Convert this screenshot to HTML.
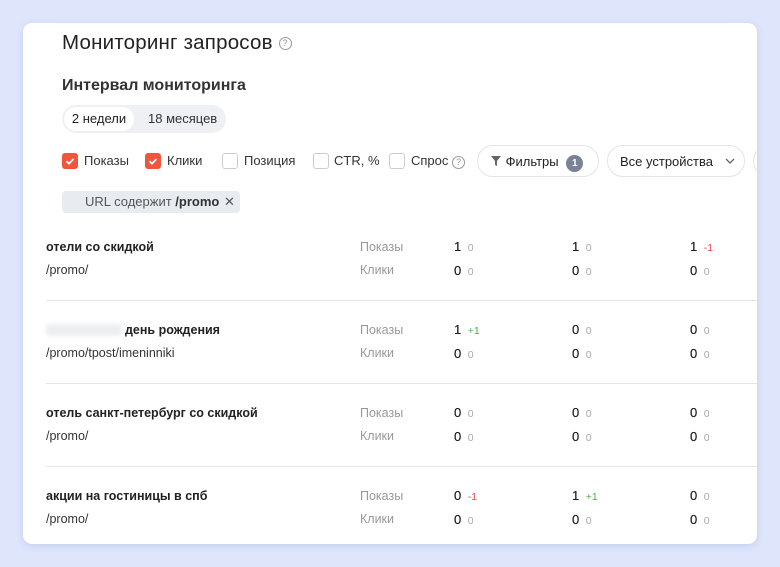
<!DOCTYPE html>
<html><head><meta charset="utf-8"><style>
body{margin:0;width:780px;height:567px;background:#dfe6fc;font-family:"Liberation Sans",sans-serif;position:relative;overflow:hidden;color:#222}
.card{position:absolute;left:23px;top:23px;width:734px;height:521px;background:#fff;border-radius:9px;box-shadow:0 2px 8px rgba(120,140,200,.25);overflow:hidden}
.a{position:absolute;white-space:nowrap}
.h1{font-size:20.5px;color:#222;left:39px;top:8px;letter-spacing:0.2px}
.h2{font-size:16px;font-weight:bold;left:39px;top:54px;color:#333}
.seg{left:39px;top:82px;width:164px;height:28px;background:#eef0f3;border-radius:14px}
.seg .on{position:absolute;left:2px;top:2px;width:70px;height:24px;background:#fff;border-radius:12px;font-size:13px;line-height:24px;text-align:center}
.seg .off{position:absolute;left:86px;top:2px;font-size:13px;line-height:24px;color:#333}
.cb{width:14px;height:14px;border:1px solid #ccc;border-radius:3px;top:130px}
.cb.ck{background:#f0553d;border-color:#f0553d}
.lb{font-size:13px;top:130px;color:#333}
.btn{height:32px;border:1px solid #e4e4e4;border-radius:17px;top:122px;font-size:13px;line-height:32px;box-sizing:border-box}
.tag{left:39px;top:168px;width:178px;height:22px;background:#e8ecf1;border-radius:4px;font-size:13px;line-height:22px;color:#555}
.q{font-size:12.5px;font-weight:bold;left:23px;color:#222}
.u{font-size:12.5px;left:23px;color:#333}
.l{font-size:12.5px;left:337px;color:#999}
.n{font-size:13px;color:#222;text-shadow:0 0 0.4px #222}
.d{font-size:10.5px;color:#aaa;text-shadow:none}
.r{color:#e5484d}.g{color:#4caf50}
.sep{left:23px;width:711px;height:1px;background:#e6e6e6}
</style></head><body>
<div class="card">
<div class="a h1">Мониторинг запросов <span style="display:inline-block;width:11px;height:11px;border:1.3px solid #999;border-radius:50%;font-size:9px;line-height:11px;text-align:center;color:#999;vertical-align:3px">?</span></div>
<div class="a h2">Интервал мониторинга</div>
<div class="a seg"><div class="on">2 недели</div><div class="off">18 месяцев</div></div>

<div class="a cb ck" style="left:39px"><svg width="14" height="14"><path d="M3.5 7.2l2.5 2.4 4.5-4.6" stroke="#fff" stroke-width="1.8" fill="none"/></svg></div>
<div class="a lb" style="left:61px">Показы</div>
<div class="a cb ck" style="left:122px"><svg width="14" height="14"><path d="M3.5 7.2l2.5 2.4 4.5-4.6" stroke="#fff" stroke-width="1.8" fill="none"/></svg></div>
<div class="a lb" style="left:144px">Клики</div>
<div class="a cb" style="left:199px"></div>
<div class="a lb" style="left:221px">Позиция</div>
<div class="a cb" style="left:290px"></div>
<div class="a lb" style="left:311px">CTR, %</div>
<div class="a cb" style="left:366px"></div>
<div class="a lb" style="left:388px">Спрос <span style="display:inline-block;width:11px;height:11px;border:1.3px solid #999;border-radius:50%;font-size:9px;line-height:11px;text-align:center;color:#999">?</span></div>
<div class="a btn" style="left:454px;width:122px;padding-left:12px"><svg width="12" height="12" style="vertical-align:-1px"><path d="M1 1h10L7 6v5L5 10V6z" fill="#666"/></svg> Фильтры <span style="display:inline-block;width:17px;height:17px;border-radius:50%;background:#7a8298;color:#fff;font-size:10px;line-height:17px;text-align:center;margin-left:4px;font-weight:bold">1</span></div>
<div class="a btn" style="left:584px;width:138px;padding-left:12px">Все устройства <svg width="10" height="6" style="margin-left:8px;vertical-align:2px"><path d="M1 1l4 4 4-4" stroke="#666" fill="none" stroke-width="1.3"/></svg></div>
<div class="a btn" style="left:730px;width:40px"></div>
<div class="a tag"><span style="margin-left:23px">URL содержит <b style="color:#333">/promo</b></span><span style="position:absolute;left:162px;color:#555">✕</span></div>

<div class="a q" style="top:217px">отели со скидкой</div><div class="a u" style="top:240px">/promo/</div>
<div class="a l" style="top:217px">Показы</div><div class="a l" style="top:240px">Клики</div>
<div class="a n" style="left:431px;top:216px">1 <span class="d">&nbsp;0</span></div><div class="a n" style="left:549px;top:216px">1 <span class="d">&nbsp;0</span></div><div class="a n" style="left:667px;top:216px">1 <span class="d r">&nbsp;-1</span></div>
<div class="a n" style="left:431px;top:240px">0 <span class="d">&nbsp;0</span></div><div class="a n" style="left:549px;top:240px">0 <span class="d">&nbsp;0</span></div><div class="a n" style="left:667px;top:240px">0 <span class="d">&nbsp;0</span></div>
<div class="a sep" style="top:277px"></div>

<div class="a" style="left:23px;top:301px;width:76px;height:12px;background:#eceef0;border-radius:3px;filter:blur(2px)"></div>
<div class="a q" style="left:102px;top:300px">день рождения</div><div class="a u" style="top:323px">/promo/tpost/imeninniki</div>
<div class="a l" style="top:300px">Показы</div><div class="a l" style="top:323px">Клики</div>
<div class="a n" style="left:431px;top:299px">1 <span class="d g">&nbsp;+1</span></div><div class="a n" style="left:549px;top:299px">0 <span class="d">&nbsp;0</span></div><div class="a n" style="left:667px;top:299px">0 <span class="d">&nbsp;0</span></div>
<div class="a n" style="left:431px;top:323px">0 <span class="d">&nbsp;0</span></div><div class="a n" style="left:549px;top:323px">0 <span class="d">&nbsp;0</span></div><div class="a n" style="left:667px;top:323px">0 <span class="d">&nbsp;0</span></div>
<div class="a sep" style="top:360px"></div>

<div class="a q" style="top:383px">отель санкт-петербург со скидкой</div><div class="a u" style="top:406px">/promo/</div>
<div class="a l" style="top:383px">Показы</div><div class="a l" style="top:406px">Клики</div>
<div class="a n" style="left:431px;top:382px">0 <span class="d">&nbsp;0</span></div><div class="a n" style="left:549px;top:382px">0 <span class="d">&nbsp;0</span></div><div class="a n" style="left:667px;top:382px">0 <span class="d">&nbsp;0</span></div>
<div class="a n" style="left:431px;top:406px">0 <span class="d">&nbsp;0</span></div><div class="a n" style="left:549px;top:406px">0 <span class="d">&nbsp;0</span></div><div class="a n" style="left:667px;top:406px">0 <span class="d">&nbsp;0</span></div>
<div class="a sep" style="top:443px"></div>

<div class="a q" style="top:466px">акции на гостиницы в спб</div><div class="a u" style="top:489px">/promo/</div>
<div class="a l" style="top:466px">Показы</div><div class="a l" style="top:489px">Клики</div>
<div class="a n" style="left:431px;top:465px">0 <span class="d r">&nbsp;-1</span></div><div class="a n" style="left:549px;top:465px">1 <span class="d g">&nbsp;+1</span></div><div class="a n" style="left:667px;top:465px">0 <span class="d">&nbsp;0</span></div>
<div class="a n" style="left:431px;top:489px">0 <span class="d">&nbsp;0</span></div><div class="a n" style="left:549px;top:489px">0 <span class="d">&nbsp;0</span></div><div class="a n" style="left:667px;top:489px">0 <span class="d">&nbsp;0</span></div>
</div>
</body></html>
